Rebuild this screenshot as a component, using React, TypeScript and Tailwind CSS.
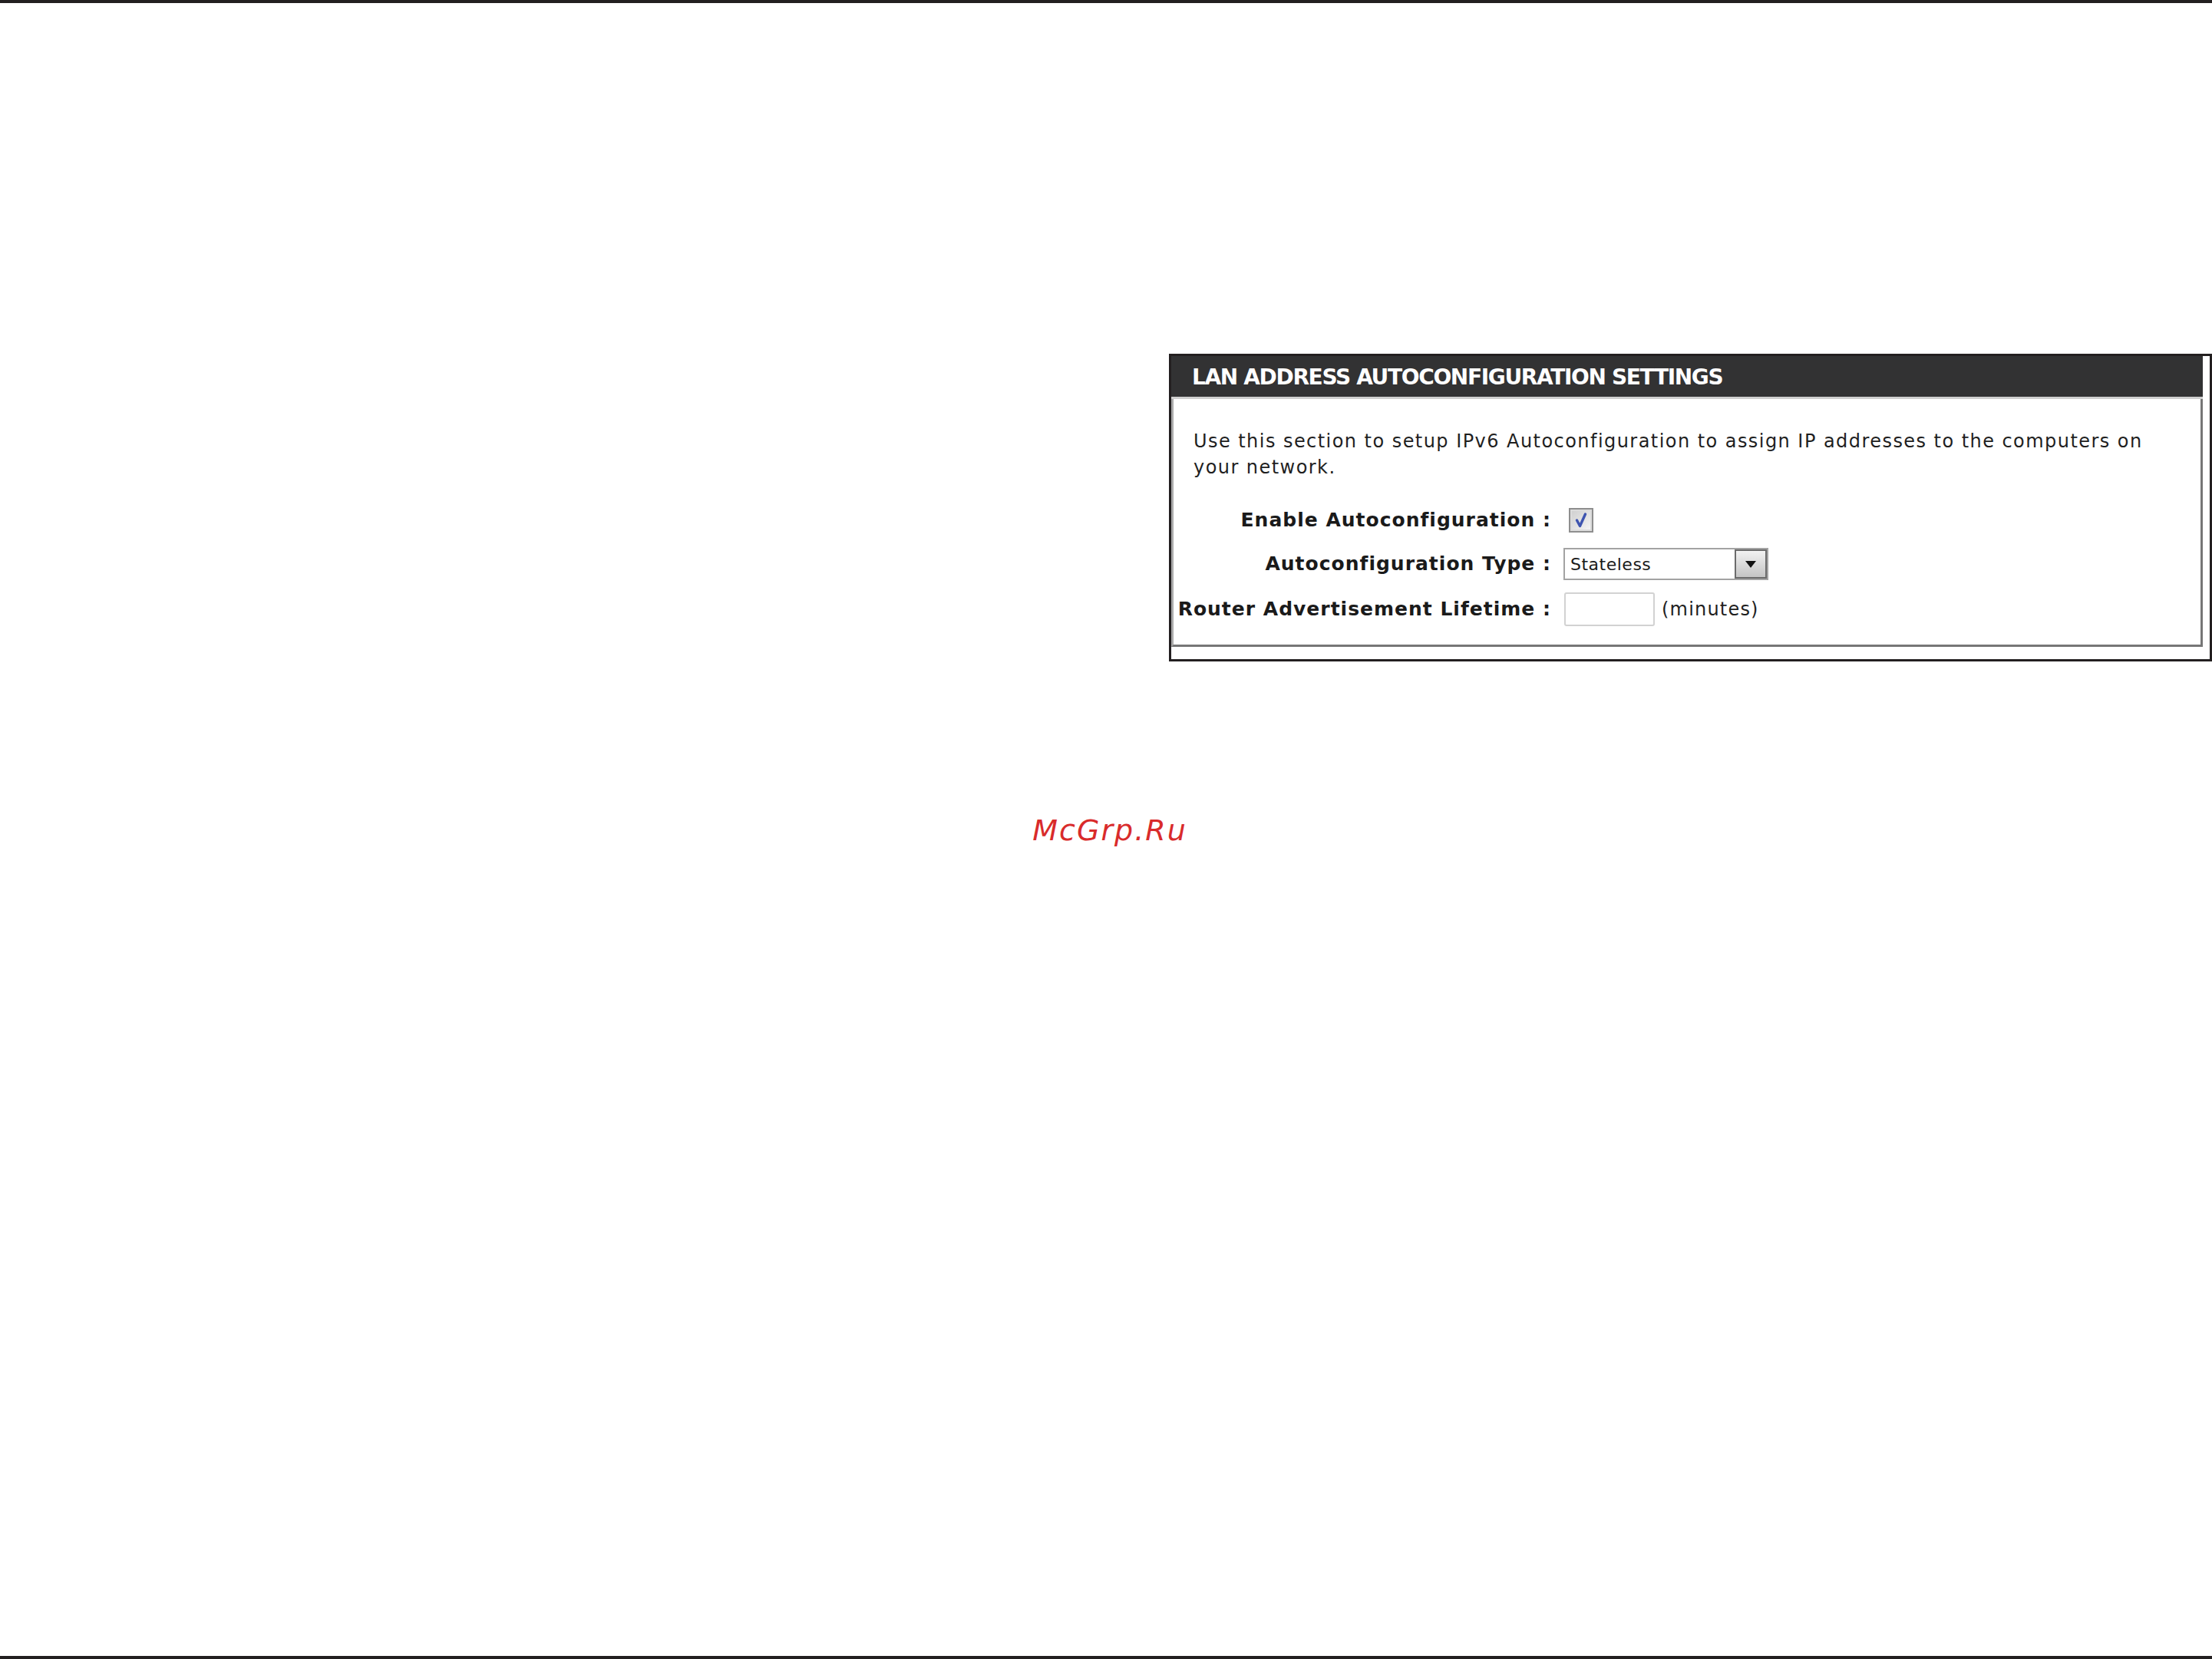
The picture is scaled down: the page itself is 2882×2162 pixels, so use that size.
import React from "react";

const sans = { fontFamily: '"DejaVu Sans", Verdana, sans-serif' };

function CheckBox() {
  return (
    <div className="w-[32px] h-[32px] border-2 border-[#8e8e8e] bg-[#dcdcdc] p-[2px]">
      <div className="w-full h-full bg-gradient-to-br from-[#d0d0d0] to-[#f4f4f4] flex items-center justify-center">
        <svg width="20" height="22" viewBox="0 0 20 22">
          <path d="M4.5 11 L8.5 18.5 L15.5 3" fill="none" stroke="#3f55b0" strokeWidth="3.4" strokeLinecap="round" strokeLinejoin="round" />
        </svg>
      </div>
    </div>
  );
}

function SelectBox() {
  return (
    <div className="w-[267px] h-[42px] border-2 border-[#a3a3a3] bg-white flex items-stretch">
      <div className="flex-1 flex items-center pl-[7px] text-[22px] tracking-[0.5px] text-[#1a1a1a]" style={sans}>
        Stateless
      </div>
      <div className="w-[42px] border-2 border-[#6b6b6b] bg-gradient-to-b from-[#f2f2f2] to-[#c4c4c4] flex items-center justify-center">
        <svg width="14" height="9" viewBox="0 0 14 9">
          <path d="M0 0 L14 0 L7 9 Z" fill="#111" />
        </svg>
      </div>
    </div>
  );
}

function Row({ label, h, children }: { label: string; h: string; children: React.ReactNode }) {
  return (
    <div className={`flex items-center ${h}`}>
      <div className="w-[494px] text-right font-bold text-[25px] text-[#1a1a1a] pr-[2px] tracking-[1px]" style={sans}>
        {label}
      </div>
      <div className="pl-[14px] flex items-center">{children}</div>
    </div>
  );
}

export default function App() {
  return (
    <div className="w-[2882px] h-[2162px] bg-white flex flex-col">
      <div className="h-[4px] bg-[#231f20]" />
      <div className="flex-1">
        <div className="pt-[457px] pl-[1523px]">
          <div className="w-[1359px] h-[401px] border-[3px] border-[#231f20] pr-[9px] pb-[16px]">
            <div className="h-full flex flex-col">
              <div className="h-[53px] bg-[#323233] flex items-center pl-[27px] pt-[2px]">
                <span className="text-white font-bold text-[28px] tracking-[-1.35px]" style={sans}>
                  LAN ADDRESS AUTOCONFIGURATION SETTINGS
                </span>
              </div>
              <div className="h-[3px] bg-[#cfcfcf]" />
              <div className="flex-1 border-l-[3px] border-r-[3px] border-b-[3px] border-l-[#ababab] border-r-[#767676] border-b-[#767676] pt-[38px] pl-[26px] pr-[40px]">
                <p className="text-[24px] leading-[34px] text-[#1f1f1f] tracking-[1.45px]" style={sans}>
                  Use this section to setup IPv6 Autoconfiguration to assign IP addresses to the computers on your network.
                </p>
                <div className="mt-[24px] -ml-[26px]">
                  <Row label="Enable Autoconfiguration :" h="h-[56px]">
                    <div className="ml-[7px]">
                      <CheckBox />
                    </div>
                  </Row>
                  <Row label="Autoconfiguration Type :" h="h-[58px]">
                    <SelectBox />
                  </Row>
                  <Row label="Router Advertisement Lifetime :" h="h-[60px]">
                    <div className="w-[118px] h-[44px] border-2 border-[#d2d2d2] rounded-[3px] bg-white ml-[1px]" />
                    <span className="ml-[9px] text-[24px] tracking-[1.2px] text-[#1f1f1f]" style={sans}>
                      (minutes)
                    </span>
                  </Row>
                </div>
              </div>
            </div>
          </div>
        </div>
        <div className="mt-[201px] pl-[10px] text-center">
          <span className="italic text-[38px] leading-none text-[#d92b2b] tracking-[2px]" style={sans}>
            McGrp.Ru
          </span>
        </div>
      </div>
      <div className="h-[4px] bg-[#231f20]" />
    </div>
  );
}
